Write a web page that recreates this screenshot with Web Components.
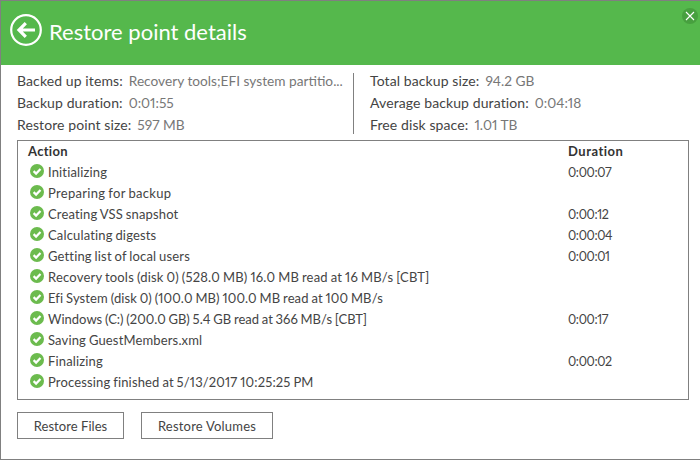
<!DOCTYPE html>
<html><head><meta charset="utf-8"><style>
html,body{margin:0;padding:0;background:#fff}
body{width:700px;height:460px;overflow:hidden;font:13px Lato,"Open Sans",sans-serif;font-variant-numeric:proportional-nums}
</style></head><body>
<restore-window></restore-window>
<script>
function def(name,html){customElements.define(name,class extends HTMLElement{constructor(){super();const s=this.attachShadow({mode:'open'});s.innerHTML=html;}})}
def('win-header',`<style>
:host{display:flex;align-items:center;box-sizing:border-box;height:64px;background:#55b84c;color:#fff;padding:0 0 6px 9px;position:relative;flex:none}
svg.b{display:block;width:34px;height:34px;flex:none}
h1{margin:0 0 0 5px;font:400 22px Lato,sans-serif;position:relative;top:1px}
.x{position:absolute;right:2px;top:7px;width:16px;height:16px;border-radius:50%;background:#47a03f}
.x svg{display:block}
</style>
<svg class="b" viewBox="0 0 34 34"><circle cx="16" cy="17" r="14.8" fill="none" stroke="#fff" stroke-width="2.2"/><path d="M25 17H9.5M15.8 10.2L9 17l6.8 6.8" fill="none" stroke="#fff" stroke-width="3.2"/></svg>
<h1><slot></slot></h1>
<div class="x"><svg width="16" height="16" viewBox="0 0 16 16"><path d="M4 4l8 8M12 4l-8 8" stroke="#fff" stroke-width="1.1"/></svg></div>`);
def('info-line',`<style>
:host{display:flex;height:22px;align-items:center;white-space:nowrap}
b{font-weight:400;font-size:14px;letter-spacing:.1px;color:#444;margin-right:6px}
span{color:#777;font-size:13.7px}
</style><b><slot name="k"></slot></b><span><slot></slot></span>`);
def('info-panel',`<style>
:host{display:flex;padding:4px 0 0 16px;height:75px;box-sizing:border-box;flex:none}
.l{width:336px;overflow:hidden}
.r{border-left:1px solid #808080;padding-left:16px;margin-top:4px;height:61px}
.r ::slotted(*){position:relative;top:-4px}
</style><div class="l"><slot name="left"></slot></div><div class="r"><slot name="right"></slot></div>`);
def('log-row',`<style>
:host{display:grid;grid-template-columns:540px 1fr;box-sizing:border-box;height:21px;padding-bottom:2px;align-items:center;white-space:nowrap;color:#444;letter-spacing:.15px;word-spacing:-.6px}
.a{display:flex;align-items:center}
svg{display:block;width:14px;height:14px;margin:-1px 4px 0 2px;flex:none}
::slotted([slot=d]){font-size:12.5px;letter-spacing:-.35px}
</style><div class="a"><svg viewBox="0 0 14 14"><circle cx="7" cy="7" r="7" fill="#6cbb4e"/><path d="M3.6 7.1l2.5 2.5 4.4-4.6" fill="none" stroke="#fff" stroke-width="2.2"/></svg><span><slot></slot></span></div><div><slot name="d"></slot></div>`);
def('log-head',`<style>
:host{display:grid;grid-template-columns:540px 1fr;box-sizing:border-box;height:21px;padding-bottom:2px;align-items:center;font-weight:700;color:#333;letter-spacing:.3px}
::slotted([slot=d]){letter-spacing:.5px}
</style><div><slot></slot></div><div><slot name="d"></slot></div>`);
def('log-table',`<style>
:host{display:block;box-sizing:border-box;margin:0 11px 0 16px;height:260px;border:1px solid #808080;padding:0 0 0 10px;flex:none}
</style><slot></slot>`);
def('flat-button',`<style>
:host{display:flex;align-items:center;justify-content:center;box-sizing:border-box;height:27px;border:1px solid #808080;color:#444;flex:none;letter-spacing:.2px}
</style><slot></slot>`);
def('btn-bar',`<style>
:host{display:flex;gap:17px;padding:12px 0 0 16px;flex:none}
</style><slot></slot>`);
def('restore-window',`<style>
:host{display:flex;flex-direction:column;box-sizing:border-box;width:700px;height:460px;border:solid #808080;border-width:1px 0 1px 1px}
</style>
<win-header>Restore point details</win-header>
<info-panel>
<div slot="left">
<info-line><span slot="k">Backed up items:</span>Recovery tools;EFI system partitio...</info-line>
<info-line><span slot="k">Backup duration:</span>0:01:55</info-line>
<info-line><span slot="k">Restore point size:</span>597 MB</info-line>
</div>
<div slot="right">
<info-line><span slot="k">Total backup size:</span>94.2 GB</info-line>
<info-line><span slot="k">Average backup duration:</span>0:04:18</info-line>
<info-line><span slot="k">Free disk space:</span>1.01 TB</info-line>
</div>
</info-panel>
<log-table>
<log-head>Action<span slot="d">Duration</span></log-head>
<log-row>Initializing<span slot="d">0:00:07</span></log-row>
<log-row style="letter-spacing:.3px">Preparing for backup</log-row>
<log-row>Creating VSS snapshot<span slot="d">0:00:12</span></log-row>
<log-row>Calculating digests<span slot="d">0:00:04</span></log-row>
<log-row>Getting list of local users<span slot="d">0:00:01</span></log-row>
<log-row style="letter-spacing:.2px">Recovery tools (disk 0) (528.0 MB) 16.0 MB read at 16 MB/s [CBT]</log-row>
<log-row style="letter-spacing:.11px">Efi System (disk 0) (100.0 MB) 100.0 MB read at 100 MB/s</log-row>
<log-row style="letter-spacing:.01px">Windows (C:) (200.0 GB) 5.4 GB read at 366 MB/s [CBT]<span slot="d">0:00:17</span></log-row>
<log-row>Saving GuestMembers.xml</log-row>
<log-row>Finalizing<span slot="d">0:00:02</span></log-row>
<log-row>Processing finished at 5/13/2017 10:25:25 PM</log-row>
</log-table>
<btn-bar><flat-button style="width:107px;letter-spacing:.05px">Restore Files</flat-button><flat-button style="width:132px">Restore Volumes</flat-button></btn-bar>`);
</script>
</body></html>
